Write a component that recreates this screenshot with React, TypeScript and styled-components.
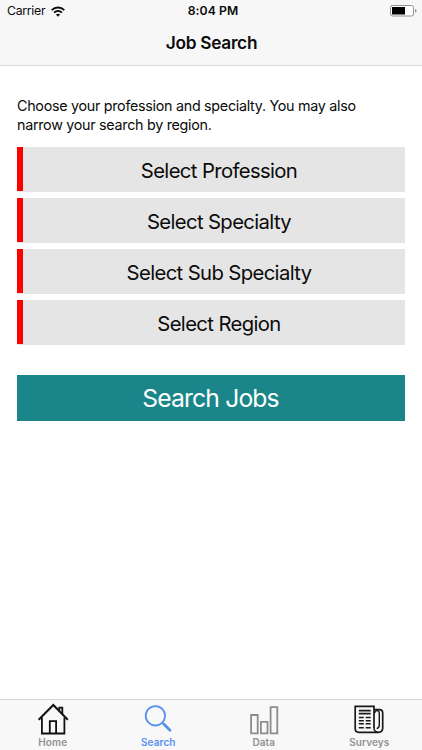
import React from "react";
import styled, { createGlobalStyle } from "styled-components";

const GlobalStyle = createGlobalStyle`
  * { box-sizing: border-box; }
  body { margin: 0; background: #fff; font-family: Inter, "Liberation Sans", sans-serif; color: #0b0b0b; }
`;

const Screen = styled.div`
  display: flex;
  flex-direction: column;
  width: 100%;
  height: 100vh;
  overflow: hidden;
`;

const Header = styled.header`
  height: 66px;
  flex: none;
  background: #f7f7f7;
  border-bottom: 1px solid #d9d9d9;
`;

const StatusBar = styled.div`
  display: grid;
  grid-template-columns: 1fr auto 1fr;
  align-items: center;
  height: 22px;
  padding: 0 5px 0 7px;
  font-size: 12.3px;
  line-height: 22px;
`;

const Carrier = styled.div`
  display: flex;
  align-items: center;
  gap: 6px;
  letter-spacing: -0.3px;
`;

const Clock = styled.div`
  padding-left: 2px;
  font-weight: 600;
  font-size: 12.2px;
  letter-spacing: 0.1px;
`;

const BatterySlot = styled.div`
  display: flex;
  justify-content: flex-end;
`;

const Title = styled.h1`
  margin: 9px 0 0;
  padding-left: 1px;
  font-size: 17.3px;
  line-height: 24px;
  font-weight: 600;
  letter-spacing: -0.3px;
  text-align: center;
`;

const Content = styled.main`
  flex: 1;
  padding: 30px 17px 0;
`;

const Intro = styled.p`
  margin: 0 0 13px;
  font-size: 14.3px;
  line-height: 19px;
  letter-spacing: -0.28px;
`;

const SelectList = styled.div`
  display: flex;
  flex-direction: column;
  gap: 6px;
`;

const SelectButton = styled.button`
  display: block;
  width: 100%;
  height: 45px;
  margin: 0;
  padding: 3px 0 0 16px;
  border: 0;
  background: linear-gradient(#f00, #f00) no-repeat 0 0 / 6px 44px #e5e5e5;
  color: #0b0b0b;
  font: 400 20.3px/42px Inter, "Liberation Sans", sans-serif;
  letter-spacing: -0.63px;
  text-align: center;
`;

const SearchButton = styled.button`
  display: block;
  width: 100%;
  height: 46px;
  margin: 30px 0 0;
  padding: 0 1px 0 0;
  border: 0;
  background: #1b868a;
  color: #fff;
  font: 400 24.7px/46px Inter, "Liberation Sans", sans-serif;
  letter-spacing: -0.85px;
`;

const TabBar = styled.nav`
  display: grid;
  grid-template-columns: repeat(4, 1fr);
  flex: none;
  height: 51px;
  border-top: 1px solid #d4d4d4;
  background: #f8f8f8;
`;

const Tab = styled.a<{ $active?: boolean }>`
  display: flex;
  flex-direction: column;
  align-items: center;
  padding-top: 3px;
  font-size: 10px;
  line-height: 12px;
  font-weight: 600;
  letter-spacing: 0.1px;
  color: ${(p) => (p.$active ? "#5790ee" : "#929292")};
`;

const TabGlyph = styled.svg.attrs({ width: 32, height: 33, viewBox: "0 0 32 33", fill: "none" })`
  display: block;
`;

const WifiIcon = () => (
  <svg width="14" height="11" viewBox="0 0 14 11" fill="none" stroke="#0b0b0b" strokeWidth="1.9">
    <path d="M.7 4.1C4.3.6 9.7.6 13.3 4.1M3.1 6.6c2.2-2.1 5.6-2.1 7.8 0" />
    <path d="M4.9 8.6c1.2-1.1 3-1.1 4.2 0L7 10.7z" fill="#0b0b0b" stroke="none" />
  </svg>
);

const BatteryIcon = () => (
  <svg width="27" height="12" viewBox="0 0 27 12">
    <rect x=".5" y=".5" width="23" height="10.5" rx="2" fill="#fff" stroke="#919191" />
    <rect x="2" y="2" width="13" height="7.5" fill="#000" />
    <path d="M25 4c2 .3 2 3.3 0 3.6z" fill="#919191" />
  </svg>
);

const HomeIcon = () => (
  <TabGlyph stroke="#111" strokeWidth="1.8">
    <path d="M1.7 16.8 16.3 2l14.5 14.8" strokeWidth="2" />
    <path d="M4.9 14.5v16h22.5v-16M12.8 30.4V18.2h6.3v12.2M22.3 7V4.7h3v6.2" />
  </TabGlyph>
);

const SearchIcon = () => (
  <TabGlyph stroke="#5790ee">
    <circle cx="13.4" cy="12.8" r="9.7" strokeWidth="1.8" />
    <path d="m20.2 19.6 2 2" strokeWidth="1.8" />
    <path d="m22 21.2 6 6" strokeWidth="2.8" strokeLinecap="round" />
  </TabGlyph>
);

const DataIcon = () => (
  <TabGlyph stroke="#8c8c8c" strokeWidth="1.8">
    <path d="M3.1 12h6.6v18.4H3.1zM12.9 18.9h6.6v11.5h-6.6zM22.6 4.2h6.7v26.2h-6.7z" />
  </TabGlyph>
);

const SurveysIcon = () => (
  <TabGlyph stroke="#181818" strokeWidth="1.7">
    <path d="M21 25V3.3H2.2v22.2q0 3.8 3.8 3.8h19.5q4.2 0 4.2-4.2V10.2q0-3.6-3.4-3.6H21" />
    <path d="M21 24.5q0 4.6 4 4.6M21.6 10.2q.4-2.6 2.6-2.6 2.1 0 2.1 2.9V22q0 2.8-2.6 3.6" strokeWidth="1.4" />
    <path d="M5.8 7.6h11.9M5.8 10.6h11.9" strokeWidth="1.6" />
    <path d="M5.8 14.6h5M12.7 14.6h5M5.8 17.7h5M12.7 17.7h5M5.8 20.8h5M12.7 20.8h5M5.8 24.7h5M12.7 24.7h5" strokeWidth="1.5" />
  </TabGlyph>
);

const filters = ["Select Profession", "Select Specialty", "Select Sub Specialty", "Select Region"];

const tabs = [
  { label: "Home", Icon: HomeIcon },
  { label: "Search", Icon: SearchIcon, active: true },
  { label: "Data", Icon: DataIcon },
  { label: "Surveys", Icon: SurveysIcon },
];

export default function App() {
  return (
    <Screen>
      <GlobalStyle />
      <Header>
        <StatusBar>
          <Carrier>Carrier <WifiIcon /></Carrier>
          <Clock>8:04 PM</Clock>
          <BatterySlot><BatteryIcon /></BatterySlot>
        </StatusBar>
        <Title>Job Search</Title>
      </Header>
      <Content>
        <Intro>
          Choose your profession and specialty. You may also<br />
          narrow your search by region.
        </Intro>
        <SelectList>
          {filters.map((label) => <SelectButton key={label}>{label}</SelectButton>)}
        </SelectList>
        <SearchButton>Search Jobs</SearchButton>
      </Content>
      <TabBar>
        {tabs.map(({ label, Icon, active }) => (
          <Tab key={label} $active={active}><Icon />{label}</Tab>
        ))}
      </TabBar>
    </Screen>
  );
}
